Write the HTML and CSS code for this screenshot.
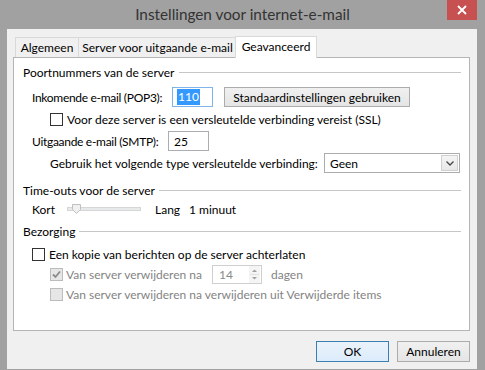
FILE: index.html
```html
<!DOCTYPE html>
<html lang="nl">
<head>
  <meta charset="UTF-8" />
  <title>Instellingen voor internet-e-mail</title>
  <link rel="stylesheet" href="styles.css">
</head>
<body>
  <div class="window">
    <div class="titlebar">
      <span class="title">Instellingen voor internet-e-mail</span>
      <div class="close">
        <svg width="10" height="10" viewBox="0 0 10 10"><path d="M1 1 L9 9 M9 1 L1 9" stroke="#fff" stroke-width="1.8" /></svg>
      </div>
    </div>

    <div class="client">
      <div class="tabs">
        <div class="tab tab-general">Algemeen</div>
        <div class="tab tab-server">Server voor uitgaande e-mail</div>
        <div class="tab tab-advanced active">Geavanceerd</div>
      </div>

      <div class="panel">
        <div class="group-title">Poortnummers van de server</div>

        <div class="row row-pop3">
          <span class="label label-pop3">Inkomende e-mail (POP3):</span>
          <span class="textbox focused"><span class="selected">110</span></span>
          <span class="btn btn-defaults">Standaardinstellingen gebruiken</span>
        </div>

        <div class="row row-ssl indent">
          <span class="checkbox"></span>
          <span>Voor deze server is een versleutelde verbinding vereist (SSL)</span>
        </div>

        <div class="row row-smtp">
          <span class="label label-smtp">Uitgaande e-mail (SMTP):</span>
          <span class="textbox">25</span>
        </div>

        <div class="row row-encrypt indent">
          <span class="label label-encrypt">Gebruik het volgende type versleutelde verbinding:</span>
          <span class="select">
            <span class="select-value">Geen</span>
            <span class="select-arrow">
              <svg width="8" height="5" viewBox="0 0 8 5"><path d="M0.5 0.5 L4 4 L7.5 0.5" fill="none" stroke="#444" stroke-width="1.3" /></svg>
            </span>
          </span>
        </div>

        <div class="group-title group-timeouts">Time-outs voor de server</div>

        <div class="row row-timeout">
          <span class="label label-short">Kort</span>
          <svg class="slider" width="74" height="14" viewBox="0 0 74 14">
            <rect x="0.5" y="5.5" width="73" height="3" fill="#e7eaea" stroke="#d6d6d6" />
            <path d="M5.5 2.5 H13.5 V7.5 L9.5 11.5 L5.5 7.5 Z" fill="#f0f0f0" stroke="#bfbfbf" />
          </svg>
          <span class="label label-long">Lang</span>
          <span>1 minuut</span>
        </div>

        <div class="group-title group-delivery">Bezorging</div>

        <div class="row row-copy">
          <span class="checkbox"></span>
          <span class="copy-text">Een kopie van berichten op de server achterlaten</span>
        </div>

        <div class="row indent disabled">
          <span class="checkbox checked">
            <svg width="11" height="11" viewBox="0 0 11 11"><path d="M2 5.5 L4.5 8 L9 2.5" fill="none" stroke="#8a8a8a" stroke-width="1.8" /></svg>
          </span>
          <span class="label label-remove">Van server verwijderen na</span>
          <span class="spinbox">
            <span class="spin-value">14</span>
            <span class="spin-arrows">
              <svg width="9" height="15" viewBox="0 0 9 15">
                <path d="M2 5 L4.5 2.5 L7 5 Z" fill="#a0a0a0" />
                <path d="M0 7.5 H9" stroke="#e0e0e0" />
                <path d="M2 10 L4.5 12.5 L7 10 Z" fill="#a0a0a0" />
              </svg>
            </span>
          </span>
          <span class="days">dagen</span>
        </div>

        <div class="row indent disabled">
          <span class="checkbox"></span>
          <span class="remove-text">Van server verwijderen na verwijderen uit Verwijderde items</span>
        </div>
      </div>

      <div class="footer">
        <span class="btn btn-ok">OK</span>
        <span class="btn btn-cancel">Annuleren</span>
      </div>
    </div>
  </div>
</body>
</html>
```

FILE: styles.css
```css
* {
  margin: 0;
  padding: 0;
  box-sizing: border-box;
}

body {
  width: 485px;
  height: 370px;
  overflow: hidden;
  background: #a1a1a1;
  font-family: 'Lato', 'Liberation Sans', sans-serif;
  font-size: 12px;
  color: #000;
}

.window {
  height: 370px;
  display: flex;
  flex-direction: column;
}

/* title bar */

.titlebar {
  position: relative;
  height: 29px;
  display: flex;
  align-items: center;
  justify-content: center;
}

.title {
  font-size: 15.3px;
  color: #333;
  margin-top: -2px;
}

.close {
  position: absolute;
  top: 0;
  right: 8px;
  width: 30px;
  height: 20px;
  background: #c75050;
  display: flex;
  align-items: center;
  justify-content: center;
}

/* client area */

.client {
  flex: 1;
  margin: 0 8px 1px 7px;
  background: #f0f0f0;
  padding: 7px 7px 0 6px;
}

.tabs {
  display: flex;
  align-items: flex-end;
  height: 22px;
  margin-left: 2px;
  margin-bottom: -1px;
  position: relative;
  z-index: 1;
}

.tab {
  height: 20px;
  margin-bottom: 1px;
  border: 1px solid #d9d9d9;
  border-bottom: none;
  background: #f0f0f0;
  display: flex;
  align-items: center;
  justify-content: center;
  padding-bottom: 1px;
  white-space: nowrap;
}

.tab + .tab {
  margin-left: -1px;
}

.tab-general { width: 64px; }
.tab-server { width: 159px; }

.tab.active {
  width: 82px;
  height: 22px;
  margin-bottom: 0;
  margin-left: -2px;
  background: #fff;
  padding-bottom: 3px;
}

.panel {
  height: 274px;
  background: #fff;
  border: 1px solid #b4b4b4;
  padding: 6px 8px 0 9px;
}

.group-title {
  height: 16px;
  display: flex;
  align-items: center;
  gap: 4px;
  white-space: nowrap;
}

.group-title::after {
  content: "";
  flex: 1;
  height: 1px;
  background: #c6c6c6;
  margin-top: 1px;
}

.group-timeouts { margin-top: 8px; }
.group-delivery { margin-top: 4px; }

.row {
  height: 20px;
  display: flex;
  align-items: center;
  padding-left: 9px;
  white-space: nowrap;
}

.row.indent {
  padding-left: 27px;
}

.row-pop3 { margin-top: 7px; }
.row-ssl, .row-smtp, .row-encrypt { height: 22px; }
.row-ssl { margin-top: 1px; }
.row-timeout { margin-top: 1px; }
.row-copy { margin-top: 5px; }

.label { flex: none; }
.label-pop3 { width: 140px; }
.label-smtp { width: 136px; }
.label-pop3, .label-smtp { letter-spacing: -0.3px; }
.label-encrypt { width: 274px; }
.label-short { width: 35px; }
.label-long { width: 34px; margin-left: 14px; }
.label-remove { width: 146px; margin-left: 3px; }

.copy-text { margin-left: 4px; }
.remove-text { margin-left: 3px; }

.disabled {
  color: #838383;
}

/* controls */

.textbox {
  width: 41px;
  height: 20px;
  border: 1px solid #abadb3;
  background: #fff;
  display: flex;
  align-items: center;
  padding-left: 5px;
}

.textbox.focused {
  border-color: #7eb4ea;
  padding-left: 4px;
}

.selected {
  background: #3399ff;
  color: #fff;
  padding: 0 1px;
  line-height: 16px;
}

.checkbox {
  flex: none;
  width: 13px;
  height: 13px;
  border: 1px solid #333;
  background: #fff;
  display: flex;
  align-items: center;
  justify-content: center;
  margin-right: 4px;
}

.disabled .checkbox {
  border-color: #bcbcbc;
  background: #e6e6e6;
  margin-right: 0;
}

.row-copy .checkbox {
  margin-right: 0;
}

.btn {
  height: 20px;
  border: 1px solid #acacac;
  background: linear-gradient(#f0f0f0, #e5e5e5);
  display: flex;
  align-items: center;
  justify-content: center;
  color: #000;
}

.btn-defaults {
  width: 186px;
  margin-left: 11px;
}

.select {
  width: 136px;
  height: 20px;
  border: 1px solid #acacac;
  background: #fff;
  display: flex;
  align-items: center;
  padding: 1px;
}

.select-value {
  flex: 1;
  padding-left: 4px;
}

.select-arrow {
  width: 17px;
  height: 16px;
  border: 1px solid #d0d0d0;
  background: linear-gradient(#f4f4f4, #e8e8e8);
  display: flex;
  align-items: center;
  justify-content: center;
}

.slider {
  flex: none;
}

.spinbox {
  width: 50px;
  height: 19px;
  border: 1px solid #cfcfcf;
  background: #fff;
  display: flex;
  align-items: center;
}

.spin-value {
  flex: 1;
  padding-left: 6px;
  color: #8a8a8a;
}

.spin-arrows {
  width: 11px;
  height: 17px;
  margin-right: 1px;
  display: flex;
  align-items: center;
  justify-content: center;
  background: #f4f4f4;
}

.days {
  margin-left: 9px;
}

/* footer */

.footer {
  display: flex;
  justify-content: flex-end;
  gap: 8px;
  margin-top: 10px;
}

.footer .btn {
  width: 73px;
  height: 21px;
}

.btn-ok {
  border-color: #3c7fb1;
  background: linear-gradient(#eaf3fb, #dcecfc);
}
```
